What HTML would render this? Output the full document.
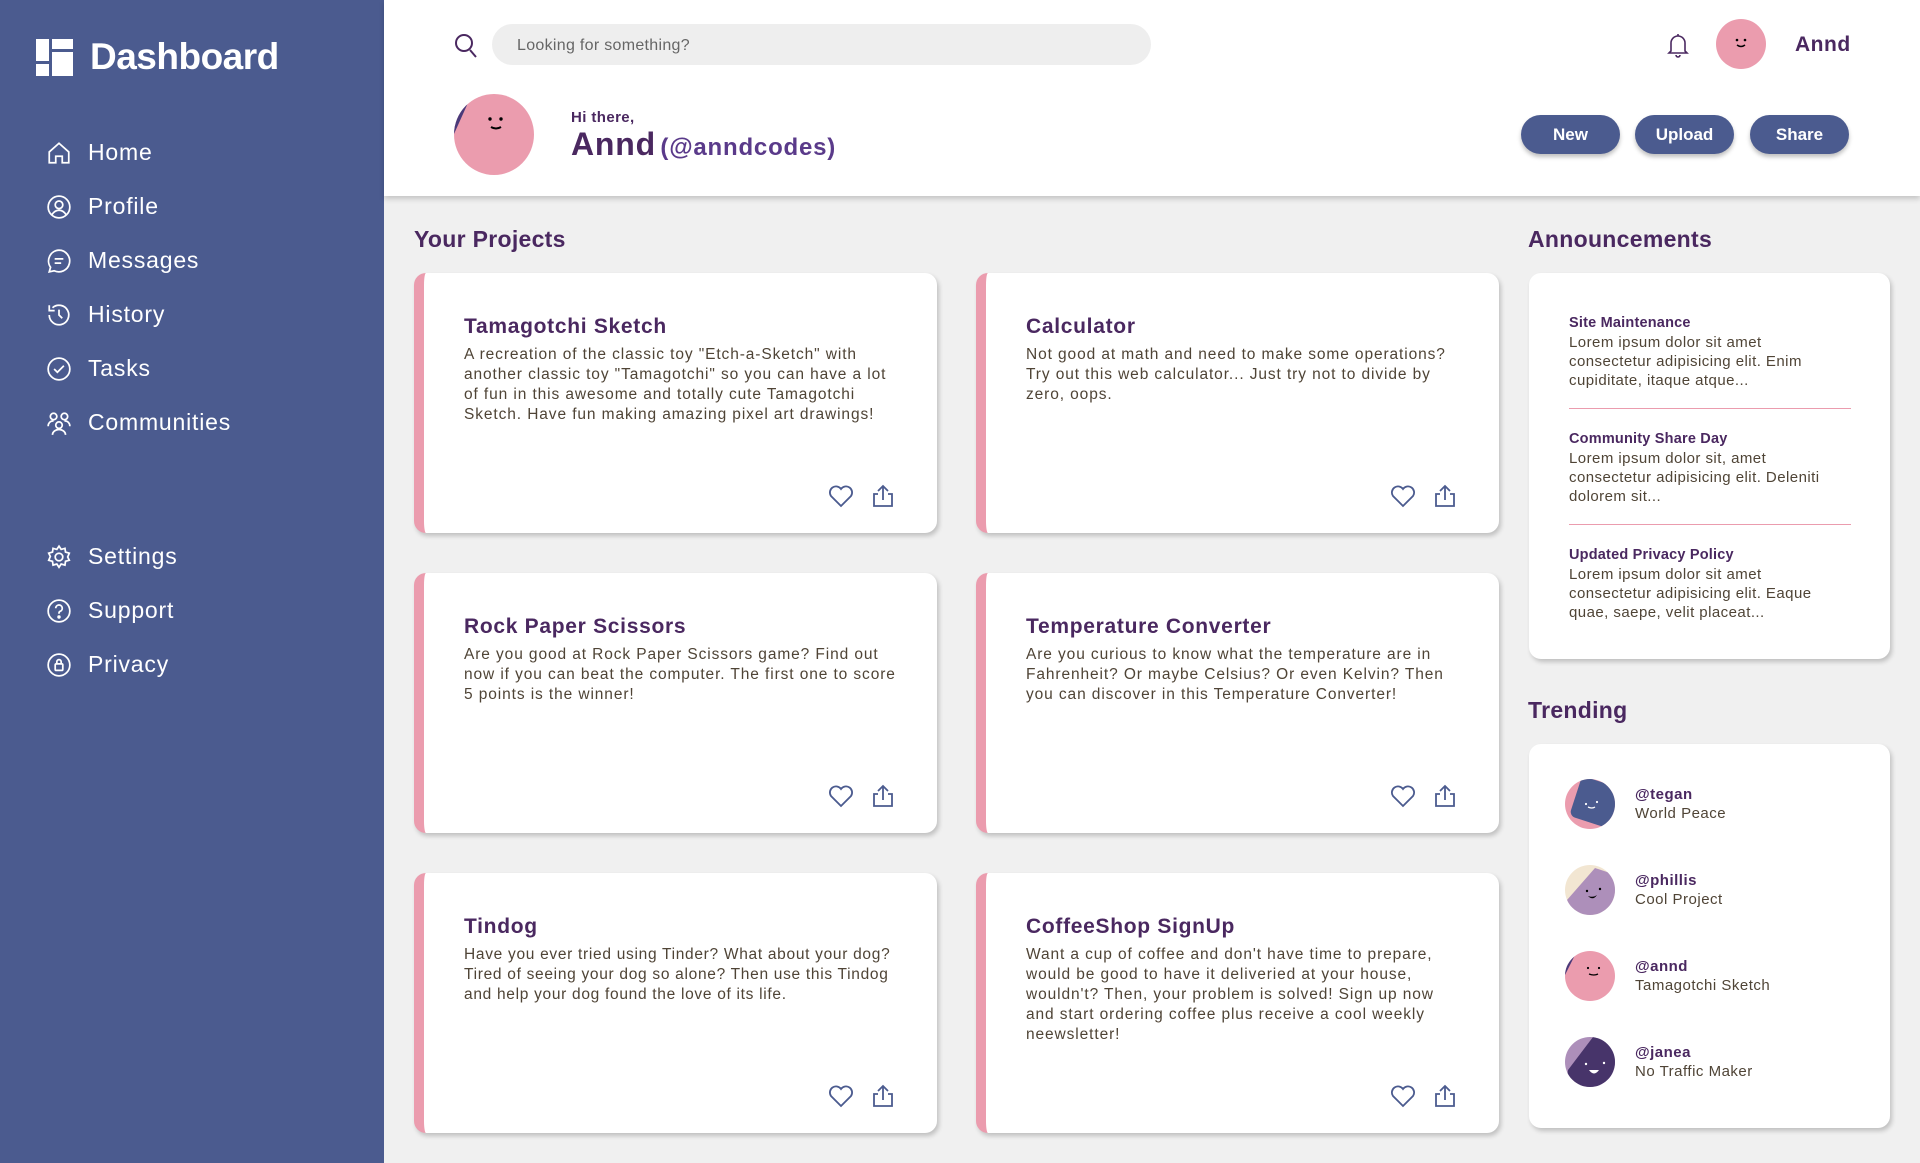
<!DOCTYPE html>
<html><head><meta charset="utf-8"><style>
*{margin:0;padding:0;box-sizing:border-box}
body{width:1920px;height:1163px;overflow:hidden;background:#f0f0f0;font-family:"Liberation Sans",sans-serif;position:relative}
.side{position:absolute;left:0;top:0;width:384px;height:1163px;background:#4b5b8f;color:#fff}
.logo{position:absolute;left:36px;top:36px;display:flex;align-items:center}
.logo span{font-size:37px;font-weight:bold;margin-left:17px;letter-spacing:-0.5px}
.nav{position:absolute;left:46px;display:flex;align-items:center;font-size:23px;letter-spacing:0.8px}
.nav svg{width:26px;height:26px;margin-right:16px}
.header{position:absolute;left:384px;top:0;width:1536px;height:196px;background:#fff;box-shadow:0 3px 5px rgba(0,0,0,0.18)}
.abs{position:absolute}
.search{left:492px;top:24px;width:659px;height:41px;background:#eee;border-radius:21px;color:#666;font-size:16px;line-height:43px;padding-left:25px;letter-spacing:0.3px}
.btn{top:115px;width:99px;height:39px;border-radius:20px;background:#4b5b8f;color:#fff;font-size:17px;font-weight:bold;text-align:center;line-height:39px;box-shadow:0 3px 4px rgba(0,0,0,0.25)}
.h2{font-size:23px;font-weight:bold;color:#4a2860;letter-spacing:0.3px}
.card{position:absolute;width:523px;height:260px;background:#fff;border-radius:12px;border-left:10px solid #eb9cae;box-shadow:2px 3px 5px rgba(0,0,0,0.2)}
.card h3{position:absolute;left:40px;top:42px;font-size:21px;color:#4a2860;letter-spacing:0.7px}
.card p{position:absolute;left:40px;top:72px;width:434px;font-size:15.5px;line-height:20px;color:#4f4436;letter-spacing:0.9px}
.card .ic{position:absolute;top:211px}
.box{position:absolute;background:#fff;border-radius:12px;box-shadow:2px 3px 5px rgba(0,0,0,0.2)}
.ann{position:absolute;left:40px;width:268px;font-size:15px;line-height:19px;color:#4f4436;letter-spacing:0.45px}
.ann b{color:#4a2860;font-size:14.5px;letter-spacing:0.2px}
.hr{position:absolute;left:40px;width:282px;height:1px;background:#eb9cae}
.tr{position:absolute;left:36px;display:flex;align-items:center;font-size:15px;color:#4f4436;line-height:19px;letter-spacing:0.5px}
.tr svg{margin-right:20px}
.tr b{color:#4a2860}
</style></head><body>
<div class="side">
 <div class="logo"><svg width="37" height="37" viewBox="0 0 37 37" fill="#fff"><rect x="0" y="0" width="13" height="22"/><rect x="16" y="0" width="21" height="10"/><rect x="0" y="25" width="13" height="12"/><rect x="16" y="13" width="21" height="24"/></svg><span>Dashboard</span></div>
 <div class="nav" style="top:139px"><svg viewBox="0 0 24 24" fill="none" stroke="#fff" stroke-width="1.6"><path d="M3 11L12 3l9 8v10h-6v-6h-6v6H3z"/></svg>Home</div>
 <div class="nav" style="top:193px"><svg viewBox="0 0 24 24" fill="none" stroke="#fff" stroke-width="1.6"><circle cx="12" cy="12" r="10"/><circle cx="12" cy="10" r="3.5"/><path d="M5.5 19c2-3 4-4 6.5-4s4.5 1 6.5 4"/></svg>Profile</div>
 <div class="nav" style="top:247px"><svg viewBox="0 0 24 24" fill="none" stroke="#fff" stroke-width="1.6"><path d="M12 2a10 10 0 1 1-4.5 19L3 22l1.2-4.2A10 10 0 0 1 12 2z"/><path d="M8 10h8M8 14h6"/></svg>Messages</div>
 <div class="nav" style="top:301px"><svg viewBox="0 0 24 24" fill="none" stroke="#fff" stroke-width="1.6"><path d="M3 12a9 9 0 1 0 3-6.7"/><path d="M3 3v5h5"/><path d="M12 7v5l3 3"/></svg>History</div>
 <div class="nav" style="top:355px"><svg viewBox="0 0 24 24" fill="none" stroke="#fff" stroke-width="1.6"><circle cx="12" cy="12" r="10"/><path d="M7.5 12l3 3 6-6"/></svg>Tasks</div>
 <div class="nav" style="top:409px"><svg viewBox="0 0 24 24" fill="none" stroke="#fff" stroke-width="1.6"><circle cx="7" cy="6" r="3"/><circle cx="17" cy="6" r="3"/><circle cx="12" cy="14" r="3"/><path d="M2 15c0-3 2-5 5-5M22 15c0-3-2-5-5-5M6 23c0-3 3-5 6-5s6 2 6 5"/></svg>Communities</div>
 <div class="nav" style="top:543px"><svg viewBox="0 0 24 24" fill="none" stroke="#fff" stroke-width="1.6"><circle cx="12" cy="12" r="3.5"/><path d="M12 2l2 3 3.5-1 .5 3.5 3.5 1-1.5 3.5 1.5 3-3.5 1-.5 3.5-3.5-1-2 3-2-3-3.5 1-.5-3.5-3.5-1 1.5-3.5L2.5 8.5l3.5-1L6.5 4 10 5z"/></svg>Settings</div>
 <div class="nav" style="top:597px"><svg viewBox="0 0 24 24" fill="none" stroke="#fff" stroke-width="1.6"><circle cx="12" cy="12" r="10"/><path d="M9 9.5a3 3 0 1 1 4 2.8c-.8.4-1 1-1 1.7v.5"/><circle cx="12" cy="17.5" r=".8" fill="#fff"/></svg>Support</div>
 <div class="nav" style="top:651px"><svg viewBox="0 0 24 24" fill="none" stroke="#fff" stroke-width="1.6"><circle cx="12" cy="12" r="10"/><rect x="8.5" y="11" width="7" height="6" rx="1"/><path d="M10 11V9a2 2 0 0 1 4 0v2"/></svg>Privacy</div>
</div>

<div class="header"></div>
<svg class="abs" style="left:454px;top:33px" width="24" height="26" viewBox="0 0 24 26" fill="none" stroke="#4a2860" stroke-width="2"><circle cx="10" cy="10" r="8"/><path d="M16 17l6 7"/></svg>
<div class="abs search">Looking for something?</div>
<svg class="abs" style="left:1667px;top:33px" width="22" height="25" viewBox="0 0 22 25" fill="none" stroke="#4a2860" stroke-width="1.6"><path d="M4 18V10a7 7 0 0 1 14 0v8l2 2H2z"/><path d="M9 22a2 2 0 0 0 4 0"/><path d="M11 1v2"/></svg>
<svg class="abs" style="left:1716px;top:19px" width="50" height="50" viewBox="0 0 50 50"><circle cx="25" cy="25" r="25" fill="#eb9cae"/><circle cx="21" cy="21" r="1.3"/><circle cx="29" cy="21" r="1.3"/><path d="M21 26q4 3 8 0" stroke="#000" stroke-width="1.5" fill="none"/></svg>
<div class="abs" style="left:1795px;top:33px;font-size:21px;font-weight:bold;color:#4a2860;letter-spacing:0.5px">Annd</div>
<svg class="abs" style="left:454px;top:94px" width="80" height="81" viewBox="0 0 80 81"><defs><clipPath id="c"><ellipse cx="40" cy="40.5" rx="40" ry="40.5"/></clipPath></defs><g clip-path="url(#c)"><rect width="80" height="81" fill="#eb9cae"/><path d="M0 0h18L0 40z" fill="#4a3a7a"/></g><circle cx="36" cy="25" r="1.7"/><circle cx="47" cy="25" r="1.7"/><path d="M37 33q5 3 10 0" stroke="#000" stroke-width="2" fill="none"/></svg>
<div class="abs" style="left:571px;top:109px;font-size:15px;font-weight:bold;color:#4a2860;letter-spacing:0.4px">Hi there,</div>
<div class="abs" style="left:571px;top:126px;color:#4a2860;white-space:nowrap"><span style="font-size:32px;font-weight:bold;letter-spacing:0.8px">Annd</span> <span style="font-size:24px;font-weight:bold;color:#5a3a8a;letter-spacing:0.8px">(@anndcodes)</span></div>
<div class="abs btn" style="left:1521px">New</div>
<div class="abs btn" style="left:1635px">Upload</div>
<div class="abs btn" style="left:1750px">Share</div>

<div class="abs h2" style="left:414px;top:226px">Your Projects</div>
<div class="abs h2" style="left:1528px;top:226px">Announcements</div>
<div class="abs h2" style="left:1528px;top:697px">Trending</div>

<div class="card" style="left:414px;top:273px"><h3>Tamagotchi Sketch</h3><p>A recreation of the classic toy "Etch-a-Sketch" with another classic toy "Tamagotchi" so you can have a lot of fun in this awesome and totally cute Tamagotchi Sketch. Have fun making amazing pixel art drawings!</p><svg class="ic" style="left:404px" width="26" height="24" viewBox="0 0 26 24" fill="none" stroke="#4b5b8f" stroke-width="1.8"><path d="M13 22L3 12a5.5 5.5 0 0 1 10-7 5.5 5.5 0 0 1 10 7z"/></svg><svg class="ic" style="left:448px" width="22" height="24" viewBox="0 0 22 24" fill="none" stroke="#4b5b8f" stroke-width="1.8"><path d="M11 16V2M6 7l5-5 5 5M6 10H2v12h18V10h-4"/></svg></div>
<div class="card" style="left:976px;top:273px"><h3>Calculator</h3><p>Not good at math and need to make some operations? Try out this web calculator... Just try not to divide by zero, oops.</p><svg class="ic" style="left:404px" width="26" height="24" viewBox="0 0 26 24" fill="none" stroke="#4b5b8f" stroke-width="1.8"><path d="M13 22L3 12a5.5 5.5 0 0 1 10-7 5.5 5.5 0 0 1 10 7z"/></svg><svg class="ic" style="left:448px" width="22" height="24" viewBox="0 0 22 24" fill="none" stroke="#4b5b8f" stroke-width="1.8"><path d="M11 16V2M6 7l5-5 5 5M6 10H2v12h18V10h-4"/></svg></div>
<div class="card" style="left:414px;top:573px"><h3>Rock Paper Scissors</h3><p>Are you good at Rock Paper Scissors game? Find out now if you can beat the computer. The first one to score 5 points is the winner!</p><svg class="ic" style="left:404px" width="26" height="24" viewBox="0 0 26 24" fill="none" stroke="#4b5b8f" stroke-width="1.8"><path d="M13 22L3 12a5.5 5.5 0 0 1 10-7 5.5 5.5 0 0 1 10 7z"/></svg><svg class="ic" style="left:448px" width="22" height="24" viewBox="0 0 22 24" fill="none" stroke="#4b5b8f" stroke-width="1.8"><path d="M11 16V2M6 7l5-5 5 5M6 10H2v12h18V10h-4"/></svg></div>
<div class="card" style="left:976px;top:573px"><h3>Temperature Converter</h3><p>Are you curious to know what the temperature are in Fahrenheit? Or maybe Celsius? Or even Kelvin? Then you can discover in this Temperature Converter!</p><svg class="ic" style="left:404px" width="26" height="24" viewBox="0 0 26 24" fill="none" stroke="#4b5b8f" stroke-width="1.8"><path d="M13 22L3 12a5.5 5.5 0 0 1 10-7 5.5 5.5 0 0 1 10 7z"/></svg><svg class="ic" style="left:448px" width="22" height="24" viewBox="0 0 22 24" fill="none" stroke="#4b5b8f" stroke-width="1.8"><path d="M11 16V2M6 7l5-5 5 5M6 10H2v12h18V10h-4"/></svg></div>
<div class="card" style="left:414px;top:873px"><h3>Tindog</h3><p style="letter-spacing:0.7px;width:440px">Have you ever tried using Tinder? What about your dog? Tired of seeing your dog so alone? Then use this Tindog and help your dog found the love of its life.</p><svg class="ic" style="left:404px" width="26" height="24" viewBox="0 0 26 24" fill="none" stroke="#4b5b8f" stroke-width="1.8"><path d="M13 22L3 12a5.5 5.5 0 0 1 10-7 5.5 5.5 0 0 1 10 7z"/></svg><svg class="ic" style="left:448px" width="22" height="24" viewBox="0 0 22 24" fill="none" stroke="#4b5b8f" stroke-width="1.8"><path d="M11 16V2M6 7l5-5 5 5M6 10H2v12h18V10h-4"/></svg></div>
<div class="card" style="left:976px;top:873px"><h3>CoffeeShop SignUp</h3><p>Want a cup of coffee and don't have time to prepare, would be good to have it deliveried at your house, wouldn't? Then, your problem is solved! Sign up now and start ordering coffee plus receive a cool weekly neewsletter!</p><svg class="ic" style="left:404px" width="26" height="24" viewBox="0 0 26 24" fill="none" stroke="#4b5b8f" stroke-width="1.8"><path d="M13 22L3 12a5.5 5.5 0 0 1 10-7 5.5 5.5 0 0 1 10 7z"/></svg><svg class="ic" style="left:448px" width="22" height="24" viewBox="0 0 22 24" fill="none" stroke="#4b5b8f" stroke-width="1.8"><path d="M11 16V2M6 7l5-5 5 5M6 10H2v12h18V10h-4"/></svg></div>

<div class="box" style="left:1529px;top:273px;width:361px;height:386px">
 <div class="ann" style="top:40px"><b>Site Maintenance</b><br>Lorem ipsum dolor sit amet consectetur adipisicing elit. Enim cupiditate, itaque atque...</div>
 <div class="hr" style="top:135px"></div>
 <div class="ann" style="top:156px"><b>Community Share Day</b><br>Lorem ipsum dolor sit, amet consectetur adipisicing elit. Deleniti dolorem sit...</div>
 <div class="hr" style="top:251px"></div>
 <div class="ann" style="top:272px"><b>Updated Privacy Policy</b><br>Lorem ipsum dolor sit amet consectetur adipisicing elit. Eaque quae, saepe, velit placeat...</div>
</div>

<div class="box" style="left:1529px;top:744px;width:361px;height:384px">
 <div class="tr" style="top:35px"><svg width="50" height="50" viewBox="0 0 50 50"><defs><clipPath id="a1"><circle cx="25" cy="25" r="25"/></clipPath></defs><g clip-path="url(#a1)"><rect width="50" height="50" fill="#eb9cae"/><rect x="10" y="2" width="44" height="42" rx="6" transform="rotate(18 30 22)" fill="#4b5b8f"/></g><circle cx="21" cy="25" r="1.1" fill="#fff"/><circle cx="32" cy="23" r="1.1" fill="#fff"/><path d="M23 28q4 2 7 0" stroke="#fff" stroke-width="1.3" fill="none"/></svg><div><b>@tegan</b><br>World Peace</div></div>
 <div class="tr" style="top:121px"><svg width="50" height="50" viewBox="0 0 50 50"><defs><clipPath id="a2"><circle cx="25" cy="25" r="25"/></clipPath></defs><g clip-path="url(#a2)"><rect width="50" height="50" fill="#f2e6d2"/><path d="M2 35L30 3l30 10v40H0z" fill="#ad8fba"/></g><circle cx="22" cy="26" r="1.2"/><circle cx="35" cy="24" r="1.2"/><path d="M23 31q5 2 9-1q-4 6-9 1z" fill="#000"/></svg><div><b>@phillis</b><br>Cool Project</div></div>
 <div class="tr" style="top:207px"><svg width="50" height="50" viewBox="0 0 50 50"><defs><clipPath id="a3"><circle cx="25" cy="25" r="25"/></clipPath></defs><g clip-path="url(#a3)"><rect width="50" height="50" fill="#eb9cae"/><path d="M0 0h12L0 24z" fill="#4a3a7a"/></g><circle cx="23" cy="17" r="1.1"/><circle cx="34" cy="17" r="1.1"/><path d="M24 23q5 2 9 0" stroke="#000" stroke-width="1.3" fill="none"/></svg><div><b>@annd</b><br>Tamagotchi Sketch</div></div>
 <div class="tr" style="top:293px"><svg width="50" height="50" viewBox="0 0 50 50"><defs><clipPath id="a4"><circle cx="25" cy="25" r="25"/></clipPath></defs><g clip-path="url(#a4)"><rect width="50" height="50" fill="#ad8fba"/><path d="M3 33L28 0h30v55H0z" fill="#47346a"/></g><circle cx="21" cy="27" r="1.2" fill="#fff"/><circle cx="39" cy="26" r="1.2" fill="#fff"/><path d="M24 33h10q-5 7-10 0z" fill="#fff"/></svg><div><b>@janea</b><br>No Traffic Maker</div></div>
</div>
</body></html>
